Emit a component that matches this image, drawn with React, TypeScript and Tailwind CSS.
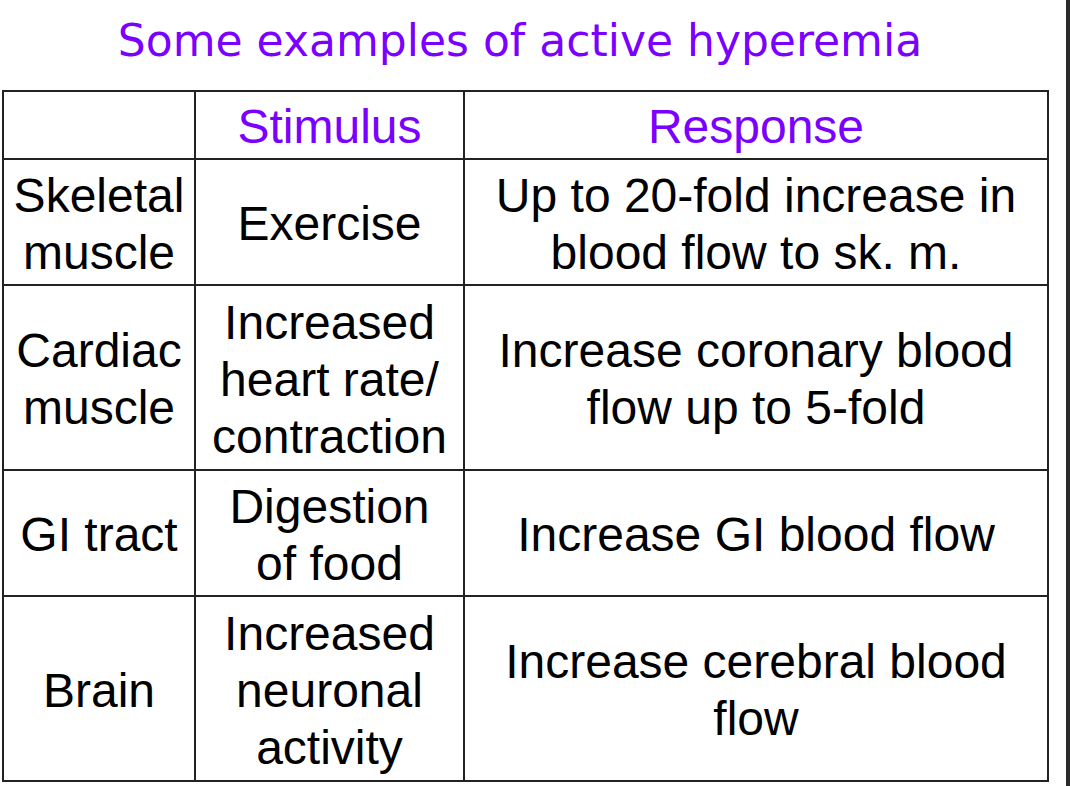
import React from "react";

const rows: { a: string[]; b: string[]; c: string[]; h: string }[] = [
  { a: ["Skeletal", "muscle"], b: ["Exercise"], c: ["Up to 20-fold increase in", "blood flow to sk. m."], h: "h-[126px]" },
  { a: ["Cardiac", "muscle"], b: ["Increased", "heart rate/", "contraction"], c: ["Increase coronary blood", "flow up to 5-fold"], h: "h-[185px]" },
  { a: ["GI tract"], b: ["Digestion", "of food"], c: ["Increase GI blood flow"], h: "h-[126px]" },
  { a: ["Brain"], b: ["Increased", "neuronal", "activity"], c: ["Increase cerebral blood", "flow"], h: "h-[185px]" },
];

function Cell({ lines, w, h, purple }: { lines: string[]; w: string; h: string; purple?: boolean }) {
  return (
    <div
      className={`${w} ${h} border-r-2 border-b-2 border-[#222] flex flex-col items-center justify-center pt-[3px] text-center text-[48px] leading-[57px] ${
        purple ? "text-[#7a00ff]" : "text-black"
      }`}
    >
      {lines.map((l, i) => (
        <div key={i} className="whitespace-nowrap">
          {l}
        </div>
      ))}
    </div>
  );
}

export default function App() {
  return (
    <div className="w-[1070px] h-[786px] bg-white flex overflow-hidden" style={{ fontFamily: '"Liberation Sans", Arial, sans-serif' }}>
      <div className="w-[1066px] h-full flex flex-col">
        <div className="h-[90px] w-[1040px] flex items-center justify-center pb-[8px]">
          <div
            className="text-[#7a00ff] text-[44px] leading-none"
            style={{ fontFamily: '"Comic Sans MS", "DejaVu Sans", sans-serif' }}
          >
            Some examples of active hyperemia
          </div>
        </div>
        <div className="ml-[2px] w-[1047px] border-l-2 border-t-2 border-[#222] flex flex-col">
          <div className="flex">
            <Cell lines={[""]} w="w-[192px]" h="h-[68px]" />
            <Cell lines={["Stimulus"]} w="w-[269px]" h="h-[68px]" purple />
            <Cell lines={["Response"]} w="w-[584px]" h="h-[68px]" purple />
          </div>
          {rows.map((r, i) => (
            <div key={i} className="flex">
              <Cell lines={r.a} w="w-[192px]" h={r.h} />
              <Cell lines={r.b} w="w-[269px]" h={r.h} />
              <Cell lines={r.c} w="w-[584px]" h={r.h} />
            </div>
          ))}
        </div>
      </div>
      <div className="w-[4px] h-full bg-[#2a2a2a]" />
    </div>
  );
}
